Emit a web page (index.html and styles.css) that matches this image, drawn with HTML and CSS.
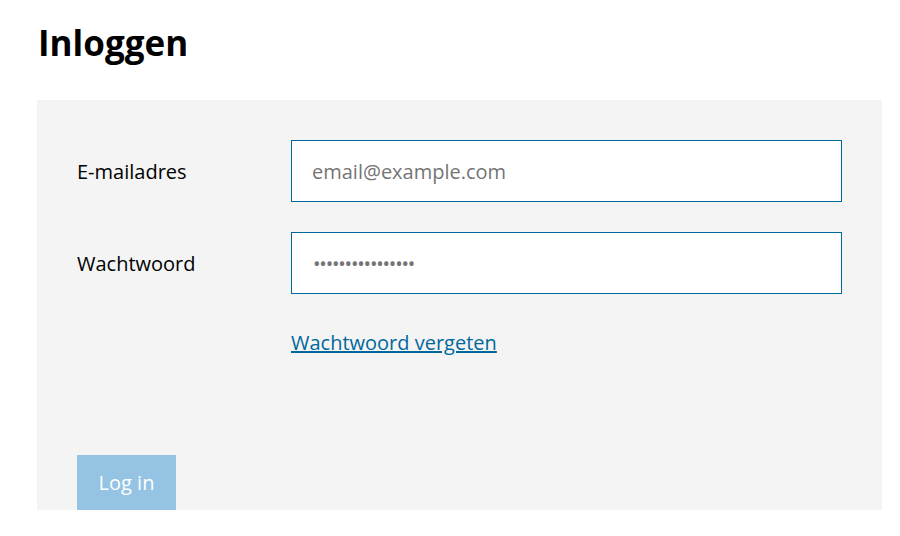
FILE: index.html
```html
<!DOCTYPE html>
<html lang="nl">
<head>
<meta charset="utf-8">
<title>Inloggen</title>
<link rel="stylesheet" href="styles.css">
</head>
<body>
<main class="page">
  <h1 class="title">Inloggen</h1>
  <form class="panel">
    <div class="row">
      <label class="label" for="email">E-mailadres</label>
      <input class="input" id="email" type="email" placeholder="email@example.com">
    </div>
    <div class="row">
      <label class="label" for="pw">Wachtwoord</label>
      <input class="input input-pw" id="pw" type="password" value="wachtwoord123456">
    </div>
    <div class="row link-row">
      <span class="label"></span>
      <a class="link" href="#">Wachtwoord vergeten</a>
    </div>
    <div class="actions">
      <button class="button" type="button" disabled>Log in</button>
    </div>
  </form>
</main>
</body>
</html>
```

FILE: styles.css
```css
* { box-sizing: border-box; }
html, body { margin: 0; padding: 0; background: #fff; }
body { font-family: "Open Sans", "Noto Sans", sans-serif; color: #000; }
.page { padding: 0 18px 0 37px; }
.title {
  margin: 0;
  padding: 21px 0 0 1px;
  height: 100px;
  font-size: 35px;
  font-weight: 700;
  line-height: 44px;
}
.panel {
  background: #f4f4f4;
  padding: 40px 40px 0 40px;
  height: 410px;
  display: flex;
  flex-direction: column;
}
.row {
  display: grid;
  grid-template-columns: 214px 1fr;
  align-items: center;
  margin-bottom: 30px;
}
.label { font-size: 20px; color: #000; }
.input {
  height: 62px;
  border: 1px solid #01689b;
  background: #fff;
  padding: 0 20px;
  font-family: inherit;
  font-size: 20px;
  color: #757575;
  width: 100%;
  outline: none;
}
.input-pw { letter-spacing: -1.2px; padding-left: 21px; }
.input::placeholder { color: #757575; }
.link-row { margin-top: 5px; margin-bottom: 0; }
.link { color: #01689b; font-size: 20px; text-decoration: underline; }
.actions { margin-top: auto; }
.button {
  background: #94c3e3;
  color: #fff;
  border: 0;
  width: 99px;
  height: 55px;
  font-family: inherit;
  font-size: 20px;
  display: block;
}
```
